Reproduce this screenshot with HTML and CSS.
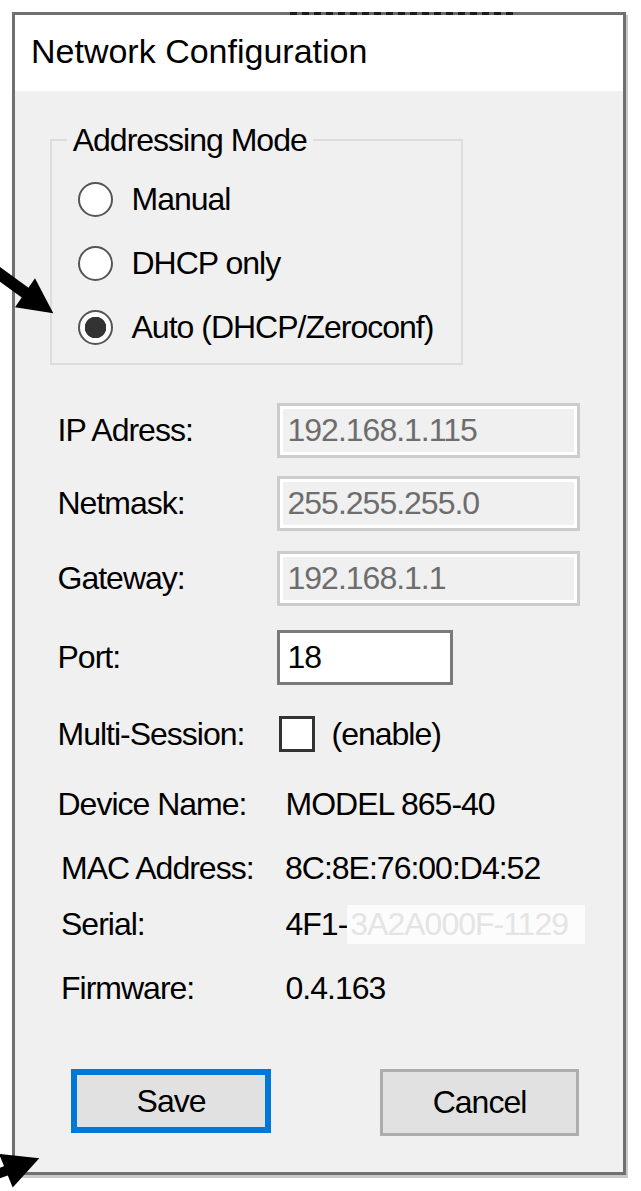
FILE: index.html
```html
<!DOCTYPE html>
<html>
<head>
<meta charset="utf-8">
<title>Network Configuration</title>
<link rel="stylesheet" href="styles.css">
</head>
<body>
<div class="stage">
  <div class="dialog">
    <div class="titlebar">
      <span class="title">Network Configuration</span>
      <span class="artifact"></span>
    </div>
    <div class="body">
      <fieldset class="group">
        <legend>Addressing Mode</legend>
        <div class="radios">
          <div class="radio"><span class="circle"></span><span>Manual</span></div>
          <div class="radio"><span class="circle"></span><span>DHCP only</span></div>
          <div class="radio"><span class="circle on"></span><span>Auto (DHCP/Zeroconf)</span></div>
        </div>
      </fieldset>

      <div class="fields">
        <div class="row"><span class="label">IP Adress:</span><span class="tb">192.168.1.115</span></div>
        <div class="row r2"><span class="label">Netmask:</span><span class="tb">255.255.255.0</span></div>
        <div class="row r3"><span class="label">Gateway:</span><span class="tb">192.168.1.1</span></div>
        <div class="row r4"><span class="label">Port:</span><span class="tb port">18</span></div>
        <div class="row r5"><span class="label">Multi-Session:</span><span class="check"></span><span>(enable)</span></div>
        <div class="row r6"><span class="label">Device Name:</span><span class="val">MODEL 865-40</span></div>
        <div class="row r7"><span class="label ind">MAC Address:</span><span class="val mac">8C:8E:76:00:D4:52</span></div>
        <div class="row r8"><span class="label ind">Serial:</span><span class="val serial">4F1-<span class="redact">3A2A000F-1129</span></span></div>
        <div class="row r9"><span class="label ind">Firmware:</span><span class="val">0.4.163</span></div>
      </div>

      <div class="buttons">
        <div class="btn save">Save</div>
        <div class="btn cancel">Cancel</div>
      </div>
    </div>
  </div>

  <svg class="arrows" width="641" height="1191" viewBox="0 0 641 1191">
    <line x1="-24" y1="257" x2="27" y2="294" stroke="#000" stroke-width="12"/>
    <polygon points="53.3,313.3 35,278.3 15,307.3" fill="#000"/>
    <line x1="-32" y1="1185" x2="8" y2="1170" stroke="#000" stroke-width="10"/>
    <polygon points="39.3,1158.3 -1,1153.8 12.7,1187.5" fill="#000"/>
  </svg>
</div>
</body>
</html>
```
FILE: styles.css
```css
* {
  box-sizing: border-box;
}

html,
body {
  margin: 0;
  padding: 0;
  background: #ffffff;
}

body {
  font-family: "Liberation Sans", Arial, sans-serif;
  color: #000000;
}

.stage {
  position: relative;
  width: 641px;
  height: 1191px;
  overflow: hidden;
  padding: 12px 0 0 12px;
}

.dialog {
  position: relative;
  width: 614px;
  height: 1163px;
  border: 3px solid #707070;
  box-shadow: 2px 3px 0 #c8c8c8;
  background: #f0f0f0;
  display: flex;
  flex-direction: column;
}

.titlebar {
  height: 76px;
  flex: none;
  background: #ffffff;
  padding: 16px 0 0 16px;
}

.title {
  display: block;
  font-size: 34px;
  line-height: 40px;
}

.artifact {
  position: absolute;
  top: -3px;
  left: 275px;
  width: 223px;
  height: 3px;
  background: repeating-linear-gradient(90deg, #1c1c1c 0 7px, #6a6a6a 7px 12px);
}

.body {
  flex: 1;
  padding: 32px 0 0 35px;
}

.group {
  margin: 0;
  width: 413px;
  padding: 0;
  border: 2px solid #dcdcdc;
  min-width: 0;
}

.group legend {
  margin-left: 14.7px;
  padding: 0 6px;
  font-size: 32px;
  letter-spacing: -1px;
  line-height: 34px;
}

.radios {
  padding: 10px 0 4px 25.5px;
}

.radio {
  display: flex;
  align-items: center;
  height: 64px;
  font-size: 32px;
  letter-spacing: -1px;
}

.circle {
  flex: none;
  width: 35px;
  height: 35px;
  border-radius: 50%;
  border: 2.5px solid #555555;
  background: #ffffff;
  margin-right: 19px;
}

.circle.on {
  background: radial-gradient(circle, #333333 0 10.5px, #ffffff 11px);
}

.fields {
  margin-top: 37.5px;
  margin-left: 7.5px;
}

.row {
  display: flex;
  align-items: center;
  height: 55px;
  font-size: 32px;
  letter-spacing: -1px;
}

.r2 { margin-top: 18px; }
.r3 { margin-top: 20px; }
.r4 { margin-top: 24px; }
.r5 { margin-top: 22px; }
.r6 { margin-top: 15px; }
.r7 { margin-top: 9px; }
.r8 { margin-top: 1px; }
.r9 { margin-top: 9.5px; }

.label {
  flex: none;
  width: 219px;
}

.label.ind {
  padding-left: 3.5px;
}

.tb {
  display: flex;
  align-items: center;
  width: 303px;
  height: 55px;
  border: 3px solid #cccccc;
  box-shadow: inset 0 0 0 3px #ffffff;
  background: #f0f0f0;
  color: #6d6d6d;
  padding-left: 8px;
}

.tb.port {
  width: 176px;
  border-color: #7a7a7a;
  box-shadow: none;
  background: #ffffff;
  color: #000000;
}

.check {
  flex: none;
  width: 36px;
  height: 36px;
  border: 3px solid #333333;
  background: #ffffff;
  margin-left: 2.5px;
  margin-right: 16.5px;
}

.val {
  display: flex;
  align-items: center;
  padding-left: 9px;
}

.val.mac {
  padding-left: 8.5px;
}

.redact {
  display: flex;
  align-items: center;
  width: 238px;
  height: 39px;
  background: #fcfcfc;
  color: #e4e4e4;
  padding-left: 3px;
}

.buttons {
  display: flex;
  align-items: flex-start;
  gap: 109px;
  margin-top: 53px;
  margin-left: 21px;
}

.btn {
  display: flex;
  align-items: center;
  justify-content: center;
  background: #e1e1e1;
  font-size: 32px;
  letter-spacing: -1px;
}

.save {
  width: 200px;
  height: 64px;
  border: 6px solid #0078d7;
}

.cancel {
  width: 199px;
  height: 67px;
  border: 3px solid #adadad;
}

.arrows {
  position: absolute;
  top: 0;
  left: 0;
  pointer-events: none;
}
```
